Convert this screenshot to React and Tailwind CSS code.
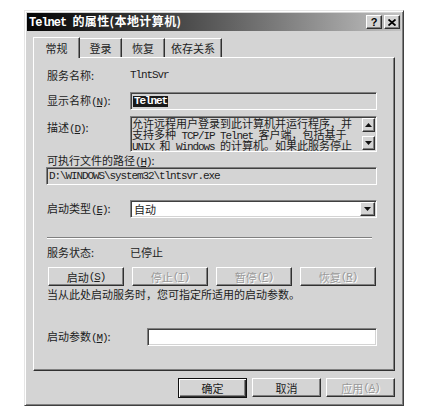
const M = ({ children, className = "" }) => (
  <span className={"font-['Liberation_Mono',monospace] tracking-[-1.1px] " + className}>{children}</span>
);

const U = ({ children }) => <span className="underline underline-offset-[1px]">{children}</span>;

const raised =
  "bg-[#d4d4d4] border border-t-white border-l-white border-r-[#303030] border-b-[#303030] shadow-[inset_-1px_-1px_0_#808080]";
const sunken =
  "border border-t-[#808080] border-l-[#808080] border-r-white border-b-white shadow-[inset_1px_1px_0_#404040,inset_-1px_-1px_0_#d4d4d4]";
const disabled = "text-[#9a9a9a] [text-shadow:1px_1px_0_#ffffff]";

function Arrow({ up = false }) {
  return (
    <svg width="7" height="4" viewBox="0 0 7 4" className="block">
      {up ? <path d="M3.5 0 L7 4 L0 4 Z" fill="#111" /> : <path d="M0 0 L7 0 L3.5 4 Z" fill="#111" />}
    </svg>
  );
}

function Btn({ children, dis = false, def = false, w = "w-[76px]" }) {
  if (def) {
    return (
      <div
        className={
          w +
          " h-[20px] border border-[#101010] bg-[#d4d4d4] shadow-[inset_1px_1px_0_#fff,inset_-1px_-1px_0_#303030,inset_-2px_-2px_0_#808080] flex items-center justify-center"
        }
      >
        {children}
      </div>
    );
  }
  return (
    <div className={w + " h-[19px] flex items-center justify-center " + raised + (dis ? " " + disabled : "")}>
      {children}
    </div>
  );
}

export default function App() {
  return (
    <div className="w-[435px] h-[412px] bg-white pt-[10px] pl-[24px] font-['Noto_Sans_CJK_SC',sans-serif] text-[11px] leading-[12px] text-[#1c1c1c]">
      <div className="w-[380px] h-[396px] bg-[#d4d4d4] border border-t-[#e6e6e6] border-l-[#e6e6e6] border-r-[#404040] border-b-[#404040] shadow-[inset_1px_1px_0_#fff,inset_-1px_-1px_0_#808080] p-[2px] flex flex-col">
        {/* Title bar */}
        <div className="h-[18px] bg-linear-to-r from-[#060606] via-[#5a5a5a] to-[#c2c2c2] flex items-center justify-between pl-[2px] pr-[1px]">
          <div className="text-white font-bold text-[12px] leading-[14px] whitespace-nowrap tracking-[0.4px]">
            <M className="font-bold tracking-[-1px]">Telnet </M>的属性(本地计算机)
          </div>
          <div className="flex gap-[2px]">
            <div className={"w-[16px] h-[14px] flex items-center justify-center " + raised}>
              <span className="font-['Liberation_Sans',sans-serif] font-bold text-[11px] leading-[11px] text-black">?</span>
            </div>
            <div className={"w-[16px] h-[14px] flex items-center justify-center " + raised}>
              <svg width="8" height="7" viewBox="0 0 8 7">
                <path d="M0.5 0.5 L7.5 6.5 M7.5 0.5 L0.5 6.5" stroke="#000" strokeWidth="1.8" />
              </svg>
            </div>
          </div>
        </div>

        {/* Body */}
        <div className="pl-[6px] pr-[6px] pt-[6px] flex flex-col">
          {/* Tabs */}
          <div className="h-[21px] flex items-end relative z-10">
            <div className="w-[47px] h-[21px] bg-[#d4d4d4] border-t border-l border-r border-t-white border-l-white border-r-[#303030] shadow-[inset_-1px_0_0_#808080] flex items-center justify-center pb-[1px]">
              常规
            </div>
            <div className="w-[42px] h-[19px] border-t border-r border-t-white border-r-[#303030] shadow-[inset_-1px_0_0_#808080] flex items-center justify-center mb-[1px]">
              登录
            </div>
            <div className="w-[43px] h-[19px] border-t border-r border-t-white border-r-[#303030] shadow-[inset_-1px_0_0_#808080] flex items-center justify-center mb-[1px]">
              恢复
            </div>
            <div className="w-[57px] h-[19px] border-t border-r border-t-white border-r-[#303030] shadow-[inset_-1px_0_0_#808080] flex items-center justify-center mb-[1px]">
              依存关系
            </div>
          </div>

          {/* Panel */}
          <div className="-mt-[1px] h-[314px] w-[362px] border border-t-white border-l-white border-r-[#303030] border-b-[#303030] shadow-[inset_-1px_-1px_0_#808080] pl-[13px] pr-[17px] flex flex-col">
            {/* Service name */}
            <div className="mt-[8px] h-[18px] flex items-center">
              <div className="w-[83px]">服务名称:</div>
              <M>TlntSvr</M>
            </div>
            {/* Display name */}
            <div className="mt-[8px] h-[18px] flex items-center">
              <div className="w-[83px] whitespace-nowrap">
                显示名称<M>(<U>N</U>)</M>:
              </div>
              <div className={"flex-1 h-[18px] bg-[#d4d4d4] flex items-center pl-[2px] " + sunken}>
                <M className="bg-[#1a1a1a] text-white font-bold leading-[11px] px-[1px]">Telnet</M>
              </div>
            </div>
            {/* Description */}
            <div className="mt-[6px] h-[36px] flex items-start">
              <div className="w-[83px] pt-[5px] whitespace-nowrap">
                描述<M>(<U>D</U>)</M>:
              </div>
              <div className={"flex-1 h-[36px] bg-[#d4d4d4] flex " + sunken}>
                <div className="flex-1 pl-[1px] pt-[1px] whitespace-nowrap">
                  <div className="h-[11px] leading-[11px]">允许远程用户登录到此计算机并运行程序，并</div>
                  <div className="h-[11px] leading-[11px]">
                    支持多种<M className="leading-[11px]"> TCP/IP Telnet </M>客户端，包括基于
                  </div>
                  <div className="h-[11px] leading-[11px]">
                    <M className="leading-[11px]">UNIX </M>和<M className="leading-[11px]"> Windows </M>的计算机。如果此服务停止
                  </div>
                </div>
                <div className="w-[13px] flex flex-col justify-between mr-[1px] my-[1px]">
                  <div className={"h-[14px] flex items-center justify-center " + raised}>
                    <Arrow up />
                  </div>
                  <div className={"h-[14px] flex items-center justify-center " + raised}>
                    <Arrow />
                  </div>
                </div>
              </div>
            </div>
            {/* Path label */}
            <div className="mt-[2px] h-[12px] whitespace-nowrap">
              可执行文件的路径<M>(<U>H</U>)</M>:
            </div>
            {/* Path box */}
            <div className={"mt-[1px] -ml-[1px] h-[18px] bg-[#d4d4d4] flex items-center pl-[2px] " + sunken}>
              <M>D:\WINDOWS\system32\tlntsvr.exe</M>
            </div>
            {/* Startup type */}
            <div className="mt-[15px] h-[18px] flex items-center">
              <div className="w-[83px] whitespace-nowrap">
                启动类型<M>(<U>E</U>)</M>:
              </div>
              <div className={"flex-1 h-[18px] bg-white flex items-center pl-[3px] pr-[1px] " + sunken}>
                <div className="flex-1">自动</div>
                <div className={"w-[15px] h-[14px] flex items-center justify-center " + raised}>
                  <Arrow />
                </div>
              </div>
            </div>
            {/* Separator */}
            <div className="mt-[19px] w-[325px] h-[2px] border-t border-t-[#808080] border-b border-b-white" />
            {/* Status */}
            <div className="mt-[6px] h-[14px] flex items-center">
              <div className="w-[83px]">服务状态:</div>
              <div>已停止</div>
            </div>
            {/* Buttons */}
            <div className="mt-[8px] flex gap-[8px] ml-[1px]">
              <Btn>
                启动<M>(<U>S</U>)</M>
              </Btn>
              <Btn dis>
                停止<M>(<U>T</U>)</M>
              </Btn>
              <Btn dis>
                暂停<M>(<U>P</U>)</M>
              </Btn>
              <Btn dis>
                恢复<M>(<U>R</U>)</M>
              </Btn>
            </div>
            {/* hint */}
            <div className="mt-[2px] h-[12px] whitespace-nowrap">当从此处启动服务时，您可指定所适用的启动参数。</div>
            {/* Start params */}
            <div className="mt-[28px] h-[18px] flex items-center">
              <div className="w-[100px] whitespace-nowrap">
                启动参数<M>(<U>M</U>)</M>:
              </div>
              <div className={"flex-1 h-[18px] bg-white " + sunken} />
            </div>
          </div>

          {/* Bottom buttons */}
          <div className="mt-[7px] flex justify-end gap-[5px] items-start">
            <Btn def w="w-[69px]">
              确定
            </Btn>
            <Btn w="w-[69px]">取消</Btn>
            <Btn dis w="w-[69px]">
              应用<M>(<U>A</U>)</M>
            </Btn>
          </div>
        </div>
      </div>
    </div>
  );
}
